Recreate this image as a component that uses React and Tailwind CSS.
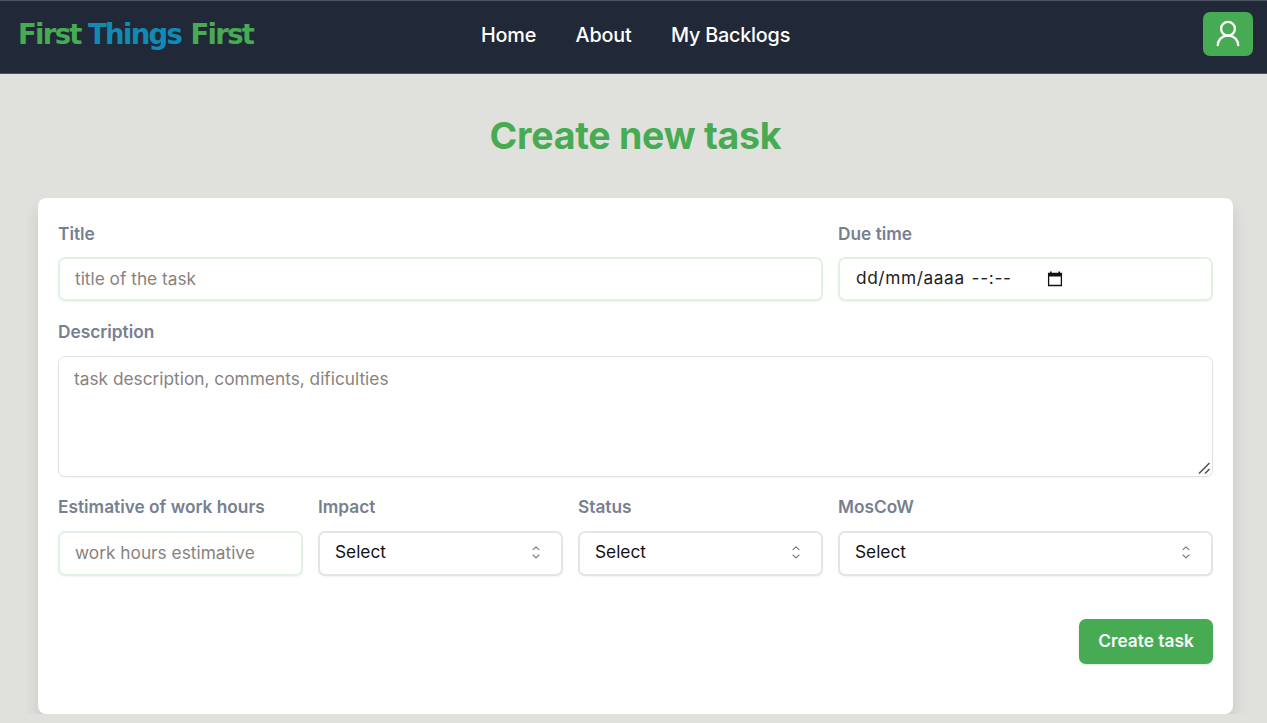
function Field({ label, className = "", labelClass = "mb-[14px]", children }) {
  return (
    <div className={`flex flex-col ${className}`}>
      <span className={`h-5 text-[17.3px] leading-5 font-semibold whitespace-nowrap text-[#778091] ${labelClass}`}>
        {label}
      </span>
      {children}
    </div>
  );
}

function Select() {
  return (
    <button
      type="button"
      className="flex h-[45px] w-full items-center justify-between rounded-[7px] border-2 border-[#e5e5e6] bg-white pr-[18px] pb-px pl-[15px] text-[17.3px] text-[#111111] shadow-xs"
    >
      <span className="pb-[2px]">Select</span>
      <svg width="14" height="14" viewBox="0 0 14 14" fill="none" stroke="#777777" strokeWidth="1.1" strokeLinecap="round" strokeLinejoin="round">
        <path d="M4 3.6 7 .8l3 2.8M4 9l3 2.8L10 9" />
      </svg>
    </button>
  );
}

export default function App() {
  return (
    <div className="flex h-[723px] w-full flex-col overflow-hidden bg-[#e0e1dc] font-['Inter',sans-serif]">
      <header className="grid h-[74px] shrink-0 grid-cols-[481px_1fr_auto] items-start border-t border-b border-t-[#4b5563] border-b-[#4b5563] bg-[#212938]">
        <div className="flex pt-[15px] pl-[18px] font-['DejaVu_Sans',sans-serif] text-[27.5px] leading-9 font-bold tracking-[-1.7px] text-[#47ab53]">
          <span className="w-[70px]">First</span>
          <span className="w-[102.5px] text-[#118bb4]">Things</span>
          <span className="w-[63px]">First</span>
        </div>
        <nav className="flex gap-[39.5px] pt-[20px] text-[19.8px] leading-7 font-medium tracking-[-0.2px] text-white">
          <a>Home</a>
          <a>About</a>
          <a>My Backlogs</a>
        </nav>
        <button
          type="button"
          aria-label="Account"
          className="mt-[11px] mr-[14px] flex h-[44px] w-[50px] items-center justify-center rounded-[7px] bg-[#47ab53]"
        >
          <svg width="26" height="28" viewBox="0 0 26 28" fill="none" stroke="white" strokeWidth="2.3" strokeLinecap="round">
            <circle cx="13" cy="8.8" r="6.9" />
            <path d="M2.8 25.2c0-5.6 4.4-9.6 10.2-9.6s10.2 4 10.2 9.6" />
          </svg>
        </button>
      </header>

      <main className="h-[640px] shrink-0 overflow-hidden px-[38px]">
        <h1 className="w-[1195px] pt-[38px] pb-[38px] text-center text-[37.5px] leading-[48px] font-bold tracking-[-0.25px] text-[#47ab53]">
          Create new task
        </h1>
        <form className="h-[516px] w-[1195px] rounded-lg bg-white px-[20px] pt-[26px] shadow-[0_10px_16px_0_rgba(0,0,0,0.11)]">
          <div className="flex gap-[15px]">
            <Field label="Title" className="w-[765px]" labelClass="mb-[13px]">
              <input
                className="h-[44px] rounded-[7px] border-2 border-[#e1f2e3] px-[15px] pb-px text-[17.3px] shadow-xs placeholder:text-[#88827d]"
                placeholder="title of the task"
              />
            </Field>
            <Field label="Due time" className="w-[375px]" labelClass="mb-[13px]">
              <div className="flex h-[44px] items-center rounded-[7px] border-2 border-[#e1f2e3] px-[16px] pb-[3px] text-[17.3px] text-[#222222] shadow-xs">
                <span className="w-[115.5px] tracking-[0.6px]">dd/mm/aaaa</span>
                <span className="w-[75.5px] tracking-[0.7px]">--:--</span>
                <svg width="16" height="16" viewBox="0 0 16 16" className="mt-[3px]" fill="none">
                  <path d="M1.6 2.5h12.8v12H1.6z" stroke="#111" strokeWidth="1.3" />
                  <path d="M1 2h14v3.5H1zM3 .5h1.6V3H3zM11.4.5H13V3h-1.6z" fill="#111" />
                </svg>
              </div>
            </Field>
          </div>
          <Field label="Description" className="mt-[21px]">
            <div className="flex h-[121px] items-start justify-between rounded-[7px] border border-[#e2e2e3] pt-[8px] pl-[15px] text-[17.3px] leading-7 text-[#88827d] shadow-xs">
              <span>task description, comments, dificulties</span>
              <svg width="14" height="14" viewBox="0 0 14 14" className="mb-px self-end" fill="none" stroke="#555" strokeWidth="1.6">
                <path d="M1 12.5 11.5 2M7 12.5 11.5 8" />
              </svg>
            </div>
          </Field>
          <div className="mt-[20px] flex gap-[15px]">
            <Field label="Estimative of work hours" className="w-[245px]">
              <input
                className="h-[45px] rounded-[7px] border-2 border-[#e1f2e3] px-[15px] pb-[2px] text-[17.3px] shadow-xs placeholder:text-[#88827d]"
                placeholder="work hours estimative"
              />
            </Field>
            <Field label="Impact" className="w-[245px]"><Select /></Field>
            <Field label="Status" className="w-[245px]"><Select /></Field>
            <Field label="MosCoW" className="w-[375px]"><Select /></Field>
          </div>
          <div className="mt-[43px] flex justify-end">
            <button
              type="button"
              className="h-[45px] w-[134px] rounded-[7px] bg-[#47ab53] pb-px text-[17.3px] font-semibold whitespace-nowrap text-[#f8fafc] shadow-sm"
            >
              Create task
            </button>
          </div>
        </form>
      </main>
    </div>
  );
}
